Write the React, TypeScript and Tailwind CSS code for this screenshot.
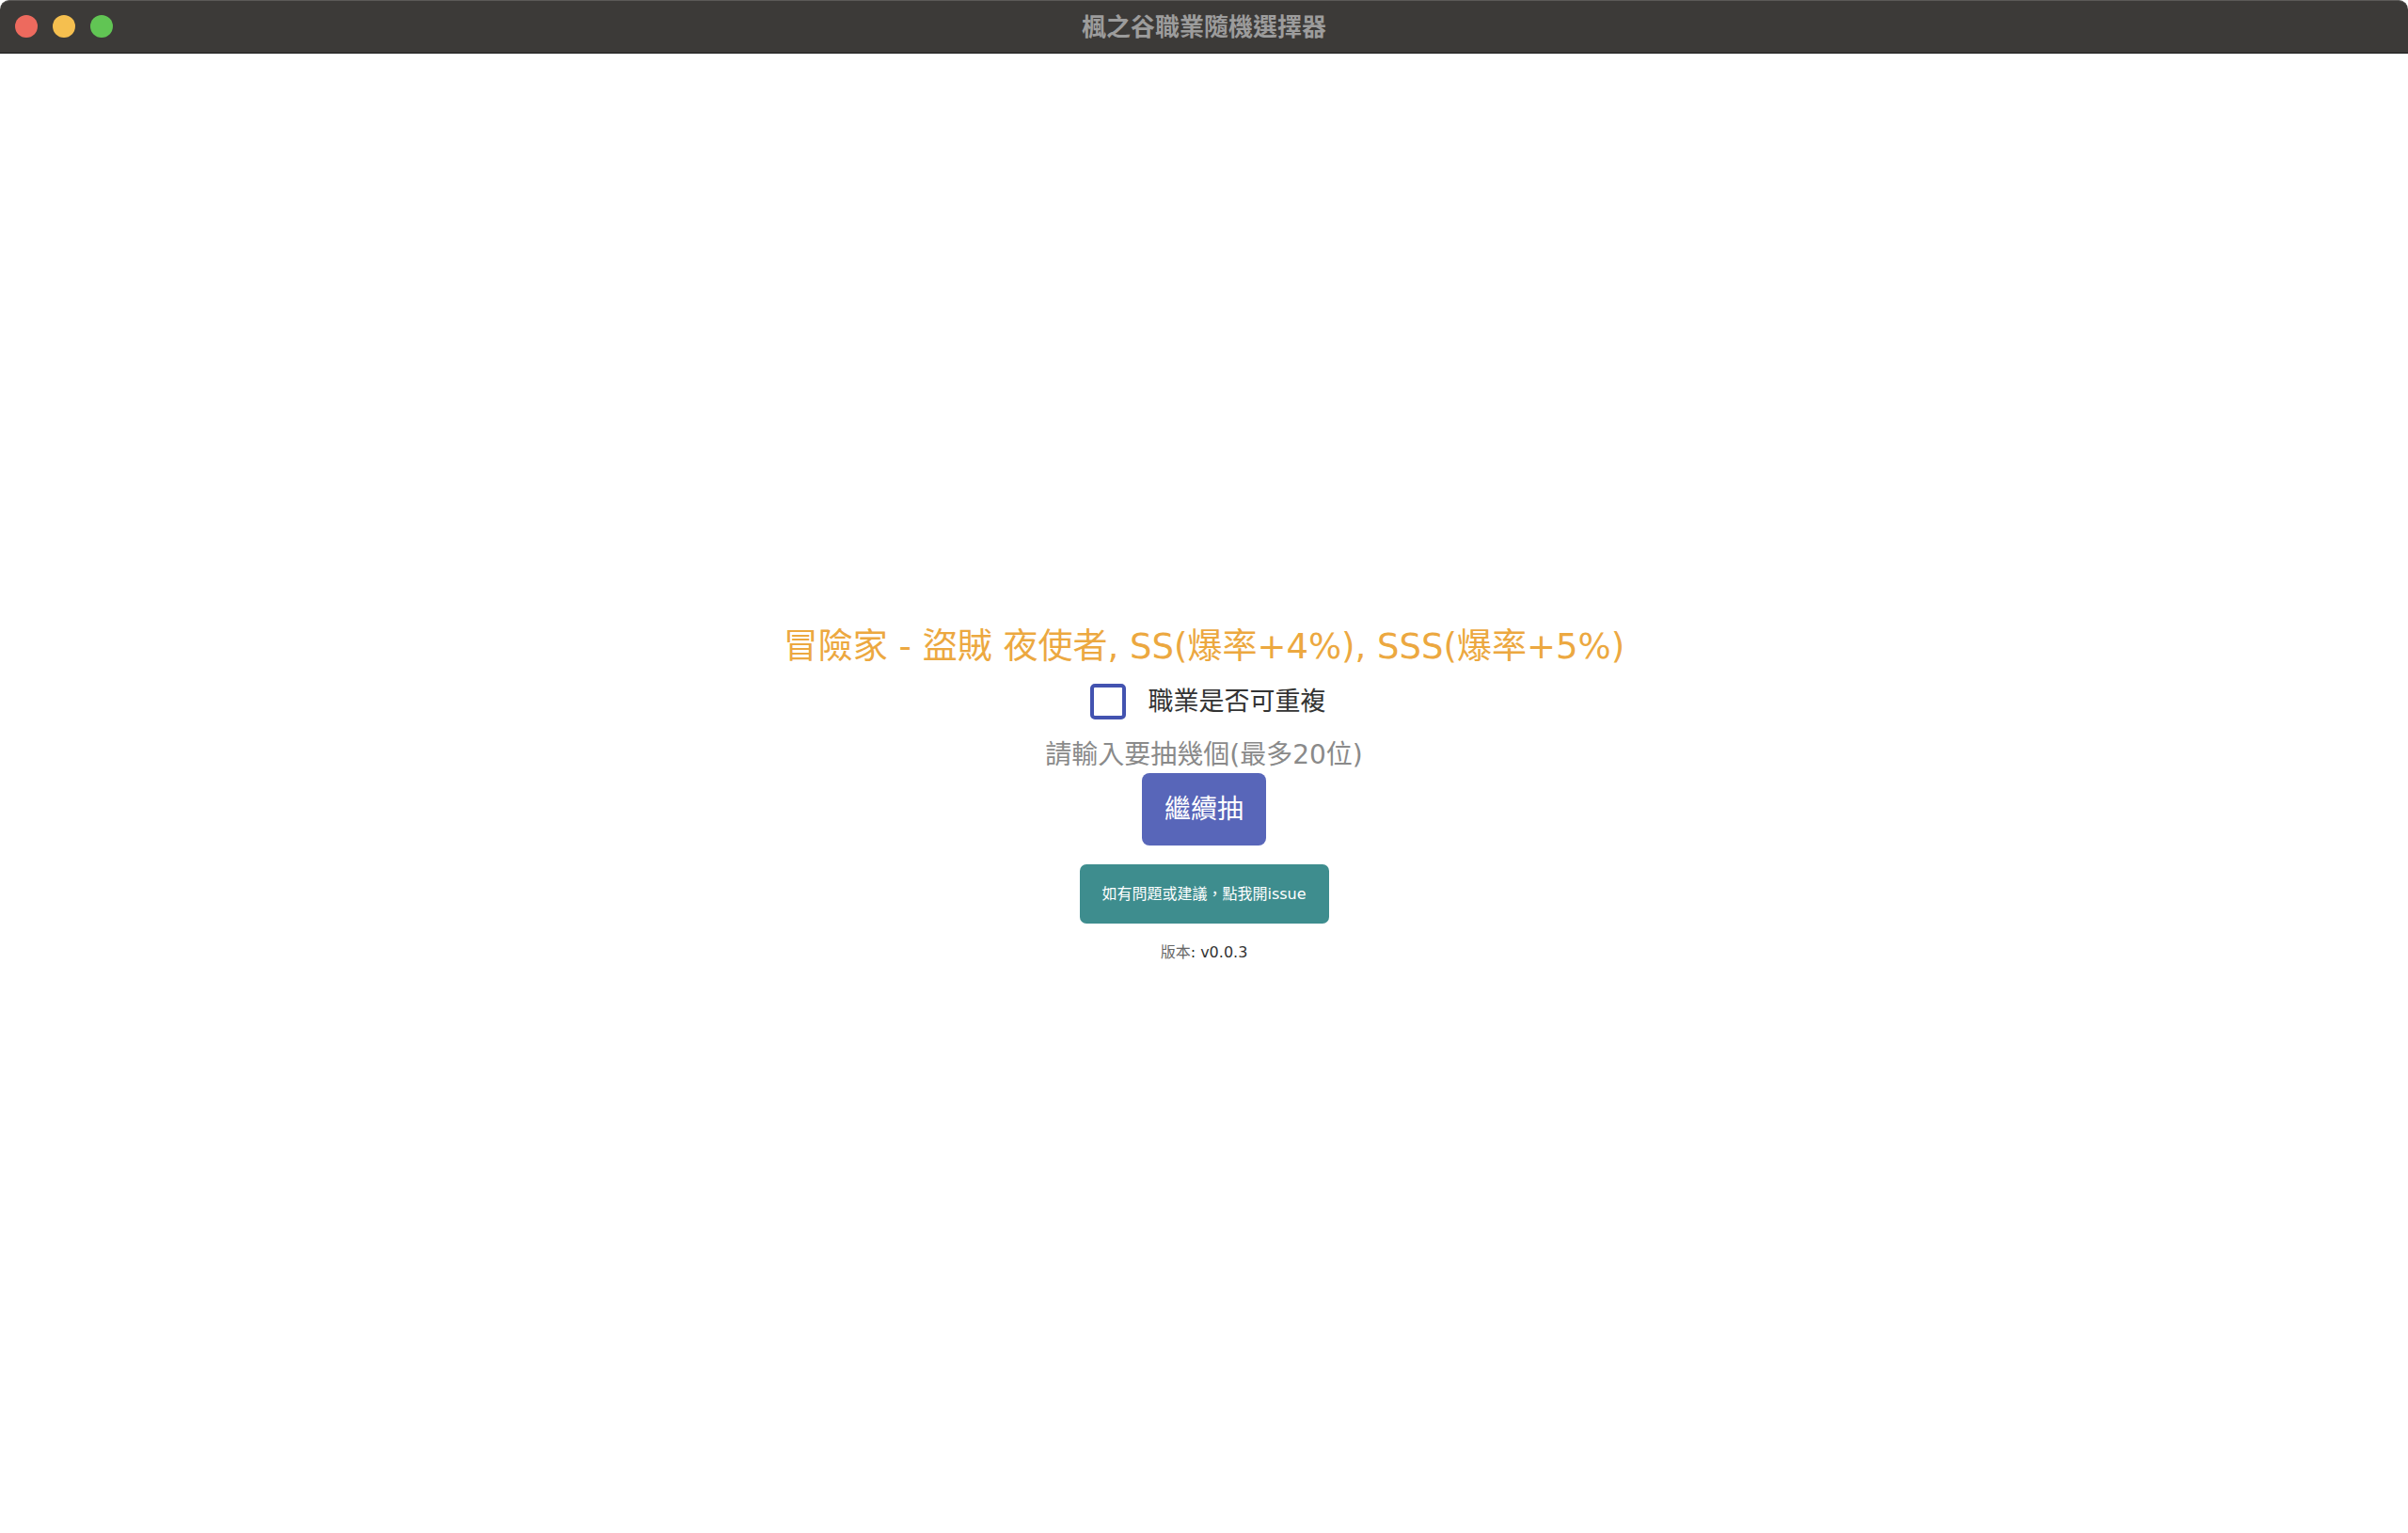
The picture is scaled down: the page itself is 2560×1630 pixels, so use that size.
import { useState } from 'react'

const font = { fontFamily: '"DejaVu Sans", "Noto Sans CJK TC", sans-serif' }

function TitleBar() {
  return (
    <div className="relative h-[57px] shrink-0 rounded-t-[10px] bg-[#3c3a38] border-t border-t-[#5b5a58] border-b border-b-[#1a1a1a] flex items-center justify-center pb-[4px]">
      <div className="absolute left-[16px] top-[15px] flex gap-[16px]">
        <span className="w-[24px] h-[24px] rounded-full bg-[#ed6a5e]" />
        <span className="w-[24px] h-[24px] rounded-full bg-[#f5bf4f]" />
        <span className="w-[24px] h-[24px] rounded-full bg-[#61c554]" />
      </div>
      <span
        className="text-[26px] font-bold text-[#9c9c9c] leading-none"
        style={{ fontFamily: '"Noto Sans CJK TC", sans-serif' }}
      >
        楓之谷職業隨機選擇器
      </span>
    </div>
  )
}

export default function App() {
  const [repeat, setRepeat] = useState(false)
  const [count, setCount] = useState('')

  return (
    <div lang="zh-Hant" className="h-[1630px] flex flex-col bg-white" style={font}>
      <TitleBar />
      <main className="flex-1 flex flex-col items-center justify-center pt-[3px]">
        <h1 className="text-[37px] leading-[44px] text-[#eca840] font-normal">
          冒險家 - 盜賊 夜使者, SS(爆率+4%), SSS(爆率+5%)
        </h1>
        <label className="mt-[17px] ml-[8px] flex items-center gap-[24px] cursor-pointer">
          <input
            type="checkbox"
            checked={repeat}
            onChange={() => setRepeat(!repeat)}
            className="appearance-none w-[38px] h-[38px] border-[4px] border-[#4353b0] rounded-[5px] checked:bg-[#4353b0]"
          />
          <span className="text-[27px] leading-[38px] text-[#333]">職業是否可重複</span>
        </label>
        <input
          type="text"
          value={count}
          onChange={(e) => setCount(e.target.value)}
          placeholder="請輸入要抽幾個(最多20位)"
          className="mt-[20px] w-[420px] h-[36px] text-center text-[28px] leading-[36px] text-[#555] placeholder:text-[#8a8a8a] outline-none bg-transparent"
        />
        <button className="mt-[1px] w-[132px] h-[77px] rounded-[8px] bg-[#5866b9] text-white text-[28px]">
          繼續抽
        </button>
        <button className="mt-[20px] w-[265px] h-[63px] rounded-[7px] bg-[#3e8d8e] text-white text-[16px]">
          如有問題或建議，點我開issue
        </button>
        <p className="mt-[20px] text-[16px] leading-[22px] text-[#333]">
          <span className="text-[#666]">版本</span>: v0.0.3
        </p>
      </main>
    </div>
  )
}
